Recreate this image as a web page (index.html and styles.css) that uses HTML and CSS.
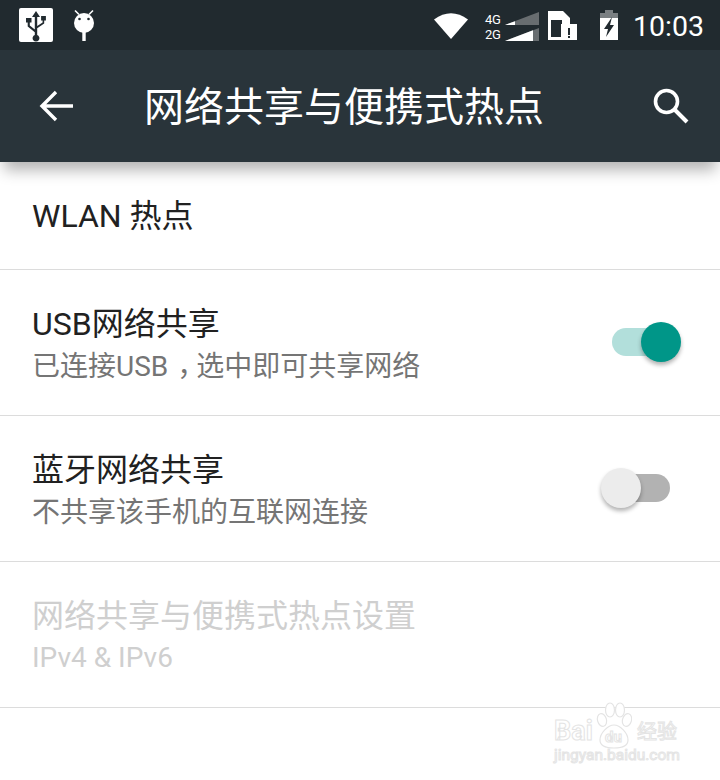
FILE: index.html
```html
<!DOCTYPE html>
<html lang="en">
<head>
    <meta charset="UTF-8">
    <meta name="viewport" content="width=device-width, initial-scale=1.0">
    <title>网络共享与便携式热点</title>
    <link rel="stylesheet" href="styles.css">
</head>
<body>
    <div class="phone">
        <!-- Status bar -->
        <div class="status-bar">
            <div class="status-left">
                <div class="usb-box">
                    <svg width="34" height="34" viewBox="0 0 34 34">
                        <path d="M17 3l-4 6h2.800v12.500l-5-4v-3h1.700V10H7v4.500h1.700v4l7.100 5.700V27a3.400 3.400 0 1 0 2.400 0v-6.800l7-4.700v-2.900h1.700V8h-4.800v4.600h1.500v1.900l-5.400 3.600V9H21z" fill="#212a2f"/>
                    </svg>
                </div>
                <svg class="android" width="22" height="32" viewBox="0 0 22 32">
                    <path d="M2 1.500l4 4M20 1.500l-4 4" stroke="#fff" stroke-width="1.600"/>
                    <circle cx="11" cy="14" r="10" fill="#fff"/>
                    <rect x="9.300" y="23" width="3.400" height="9" fill="#fff"/>
                    <circle cx="6.500" cy="10" r="1.300" fill="#212a2f"/>
                    <circle cx="15.500" cy="10" r="1.300" fill="#212a2f"/>
                </svg>
            </div>
            <div class="status-right">
                <svg class="wifi" width="34" height="28" viewBox="0 0 34 28">
                    <path d="M0 8.500Q17 -4 34 8.500L17 28z" fill="#fff"/>
                </svg>
                <div class="signal">
                    <div class="signal-labels"><span>4G</span><span>2G</span></div>
                    <div class="signal-bars">
                        <svg width="34" height="16" viewBox="0 0 34 16">
                            <path d="M0 13L34 0v13z" fill="#686d70"/>
                            <path d="M0 13l10-3.800V13z" fill="#fff"/>
                        </svg>
                        <svg width="34" height="16" viewBox="0 0 34 16">
                            <path d="M0 13L34 0v13z" fill="#686d70"/>
                            <path d="M0 13l28-10.700V13z" fill="#fff"/>
                        </svg>
                    </div>
                </div>
                <svg class="sim" width="29" height="30" viewBox="0 0 29 30">
                    <path d="M0 1h15l7 7v22H0z" fill="#fff"/>
                    <rect x="3" y="10" width="11" height="17" fill="#212a2f"/>
                    <rect x="13" y="14" width="16" height="16" fill="#fff"/>
                    <rect x="20" y="18" width="2" height="7" fill="#212a2f"/>
                    <rect x="20" y="26" width="2" height="2" fill="#212a2f"/>
                </svg>
                <svg class="battery" width="18" height="30" viewBox="0 0 18 30">
                    <path d="M5 0h8v3h5v6H0V3h5z" fill="#7a7f82"/>
                    <path d="M0 8h18v22H0z" fill="#fff"/>
                    <path d="M12 7L4 19h4l-2 8 8-12h-4l2-8z" fill="#212a2f"/>
                </svg>
                <span class="clock">10:03</span>
            </div>
        </div>

        <!-- Toolbar -->
        <div class="toolbar">
            <svg class="back" width="36" height="34" viewBox="0 0 36 34">
                <path d="M17 3L3 17l14 14M3 17h31" fill="none" stroke="#fff" stroke-width="3.400"/>
            </svg>
            <h1 class="title">网络共享与便携式热点</h1>
            <svg class="search" width="38" height="38" viewBox="0 0 38 38">
                <circle cx="14.500" cy="14.500" r="11" fill="none" stroke="#fff" stroke-width="3.600"/>
                <path d="M22.500 22.500L35 35" stroke="#fff" stroke-width="4"/>
            </svg>
        </div>

        <!-- Settings list -->
        <div class="list">
            <div class="row row-single">
                <div class="row-title">WLAN 热点</div>
            </div>
            <div class="row">
                <div class="row-text">
                    <div class="row-title">USB网络共享</div>
                    <div class="row-sub">已连接USB<span class="comma">，</span>选中即可共享网络</div>
                </div>
                <div class="switch switch-on"><span class="thumb"></span></div>
            </div>
            <div class="row">
                <div class="row-text">
                    <div class="row-title">蓝牙网络共享</div>
                    <div class="row-sub">不共享该手机的互联网连接</div>
                </div>
                <div class="switch switch-off"><span class="thumb"></span></div>
            </div>
            <div class="row row-disabled">
                <div class="row-text">
                    <div class="row-title">网络共享与便携式热点设置</div>
                    <div class="row-sub">IPv4 &amp; IPv6</div>
                </div>
            </div>
        </div>

        <!-- Watermark -->
        <div class="watermark">
            <svg class="paw" width="36" height="48" viewBox="0 0 36 48">
                <g fill="#fff" stroke="#e4e4e4" stroke-width="1.200">
                    <ellipse cx="6" cy="18" rx="4.500" ry="6.500" transform="rotate(-15 6 18)"/>
                    <ellipse cx="14" cy="8" rx="4.500" ry="7"/>
                    <ellipse cx="24" cy="8" rx="4.500" ry="7"/>
                    <ellipse cx="31" cy="18" rx="4.500" ry="6.500" transform="rotate(15 31 18)"/>
                    <path d="M18 23c6 0 14 8 14 15 0 6-6 8-14 8S4 44 4 38c0-7 8-15 14-15z"/>
                </g>
            </svg>
            <span class="wm-bai">Bai</span>
            <span class="wm-du">du</span>
            <span class="wm-jy">经验</span>
            <span class="wm-url">jingyan.baidu.com</span>
        </div>
    </div>
</body>
</html>
```

FILE: styles.css
```css
* {
    box-sizing: border-box;
}
body {
    margin: 0;
    padding: 0;
    background: #fff;
    font-family: Roboto, "Noto Sans CJK SC", sans-serif;
}
.phone {
    position: relative;
    width: 720px;
    height: 780px;
    overflow: hidden;
    background: #fff;
}
.status-bar {
    height: 50px;
    background: #212a2f;
    display: flex;
    justify-content: space-between;
    align-items: center;
    padding: 0 16px 0 19px;
}
.status-left {
    display: flex;
    align-items: center;
    gap: 20px;
}
.usb-box {
    width: 34px;
    height: 34px;
    background: #fff;
    border-radius: 2px;
}
.usb-box svg {
    display: block;
}
.android {
    display: block;
}
.status-right {
    display: flex;
    align-items: center;
}
.wifi {
    margin-right: 17px;
}
.signal {
    display: flex;
    align-items: center;
    gap: 5px;
    margin-right: 9px;
}
.signal-labels {
    display: flex;
    flex-direction: column;
    margin-top: 4px;
    color: #fff;
    font-size: 13px;
    line-height: 15.500px;
    width: 15px;
    letter-spacing: -0.3px;
    white-space: nowrap;
}
.signal-bars {
    margin-top: 6px;
}
.signal-bars svg {
    display: block;
}
.sim {
    margin-right: 23px;
}
.battery {
    margin-right: 15px;
}
.clock {
    color: #fff;
    font-size: 28.500px;
    line-height: 46px;
    margin-top: 4px;
    width: 71px;
}
.toolbar {
    position: relative;
    height: 112px;
    background: #29343a;
    display: flex;
    align-items: center;
    padding: 0 30px 0 39px;
    box-shadow: 0 12px 14px -4px rgba(0, 0, 0, 0.3);
}
.title {
    flex: 1;
    margin: 4px 0 0 69px;
    color: #fff;
    font-size: 40px;
    font-weight: 400;
    line-height: 108px;
    white-space: nowrap;
}
.row {
    height: 146px;
    padding: 0 32px;
    display: flex;
    align-items: center;
    justify-content: space-between;
    border-bottom: 1px solid #dcdcdc;
}
.row-single {
    height: 108px;
}
.row-text {
    margin-top: 3px;
}
.row-title {
    color: #212121;
    font-size: 32px;
    line-height: 44px;
}
.row-sub {
    margin-top: 1px;
    color: #757575;
    font-size: 28px;
    line-height: 40px;
}
.comma {
    font-feature-settings: "halt";
    padding: 0 5px 0 9px;
}
.row-disabled .row-text {
    margin-top: 2px;
}
.row-disabled .row-sub {
    margin-top: 0;
}
.row-disabled .row-title,
.row-disabled .row-sub {
    color: #cfcfcf;
}
.switch {
    position: relative;
    width: 58px;
    height: 28px;
    margin: 0 18px 2px 0;
    border-radius: 14px;
}
.thumb {
    position: absolute;
    top: -6px;
    width: 40px;
    height: 40px;
    border-radius: 50%;
    box-shadow: 0 3px 4px rgba(0, 0, 0, 0.3);
}
.switch-on {
    background: #b2dfdb;
}
.switch-on .thumb {
    right: -11px;
    background: #009688;
}
.switch-off {
    background: #b2b2b2;
}
.switch-off .thumb {
    left: -11px;
    background: #ececec;
}
.watermark {
    position: absolute;
    left: 550px;
    top: 700px;
    width: 170px;
    height: 70px;
    color: #fff;
}
.watermark span {
    position: absolute;
    -webkit-text-stroke: 1px #e4e4e4;
    white-space: nowrap;
}
.paw {
    position: absolute;
    left: 46px;
    top: 2px;
}
.wm-bai {
    left: 4px;
    top: 16px;
    font-size: 27px;
    font-weight: 700;
    line-height: 30px;
}
.wm-du {
    left: 55px;
    top: 29px;
    font-size: 15px;
    font-weight: 700;
    line-height: 16px;
}
.wm-jy {
    left: 87px;
    top: 19px;
    font-size: 20px;
    line-height: 26px;
}
.wm-url {
    left: 4px;
    top: 48px;
    font-size: 15.500px;
    line-height: 14px;
}
```
